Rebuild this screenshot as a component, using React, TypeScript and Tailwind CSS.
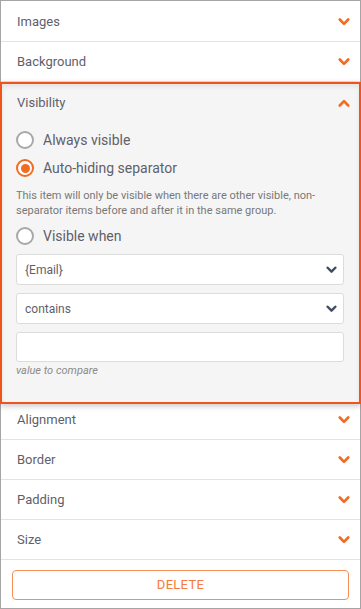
import React from "react";

const ORANGE = "#f26b21";

function Chevron({ up = false, color = ORANGE, w = 12 }: { up?: boolean; color?: string; w?: number }) {
  return (
    <svg width={w} height={8} viewBox="0 0 12 8" fill="none">
      <path
        d={up ? "M1.8 6.5 L6 2.2 L10.2 6.5" : "M1.8 1.5 L6 5.8 L10.2 1.5"}
        stroke={color}
        strokeWidth={2.6}
        strokeLinecap="round"
        strokeLinejoin="round"
      />
    </svg>
  );
}

function Row({ title, className }: { title: string; className: string }) {
  return (
    <div className={`flex items-center justify-between pl-4 pr-[10px] border-b border-[#e3e3e3] ${className}`}>
      <span className="text-[13px] text-[#5f5f6b]">{title}</span>
      <Chevron />
    </div>
  );
}

function Radio({ label, checked = false }: { label: string; checked?: boolean }) {
  return (
    <div className="flex h-[28px] items-center gap-[9px]">
      <div
        className={`flex h-[18px] w-[18px] items-center justify-center rounded-full border-2 bg-white ${
          checked ? "border-[#f26b21]" : "border-[#a8a8a8]"
        }`}
      >
        {checked && <div className="h-[9px] w-[9px] rounded-full bg-[#f26b21]" />}
      </div>
      <span className="text-[14px] text-[#5f5f6b]">{label}</span>
    </div>
  );
}

function Select({ value, className }: { value: string; className: string }) {
  return (
    <div
      className={`flex h-[31px] items-center justify-between rounded-[3px] border border-[#dcdcdc] bg-white pl-2 pr-[6px] ${className}`}
    >
      <span className="text-[12px] text-[#5f5f6b]">{value}</span>
      <Chevron color="#3f4b5e" w={11} />
    </div>
  );
}

export default function App() {
  return (
    <div className="flex h-[609px] w-[361px] flex-col border border-[#a5a5a5] bg-white font-['Roboto','Liberation_Sans',sans-serif]">
      <Row title="Images" className="h-[41px] pt-px" />
      <Row title="Background" className="h-[40px]" />

      {/* Visibility panel */}
      <div className="relative z-10 -mx-px flex flex-col border-2 border-[#f0531c] bg-[#f5f5f5] pl-[14px] pr-[15px] pb-[24px] shadow-[0_2px_6px_rgba(0,0,0,0.22),inset_0_3px_4px_rgba(0,0,0,0.07)]">
        <div className="flex h-[37px] items-center justify-between pl-px pt-px">
          <span className="text-[13px] text-[#5f5f6b]">Visibility</span>
          <div className="-mr-[6px]">
            <Chevron up />
          </div>
        </div>
        <div className="mt-[5px] flex flex-col">
          <Radio label="Always visible" />
          <Radio label="Auto-hiding separator" checked />
        </div>
        <p className="mt-[6px] text-[11px] leading-[15px] text-[#787878]">
          This item will only be visible when there are other visible, non-separator items before and after it in the
          same group.
        </p>
        <div className="mt-[4px]">
          <Radio label="Visible when" />
        </div>
        <Select value="{Email}" className="mt-[4px]" />
        <Select value="contains" className="mt-[8px]" />
        <div className="mt-[8px] h-[30px] rounded-[3px] border border-[#dcdcdc] bg-white" />
        <span className="mt-[2px] text-[11px] italic leading-[14px] text-[#8a8a8a]">value to compare</span>
      </div>

      <Row title="Alignment" className="h-[36px] pb-[4px]" />
      <Row title="Border" className="h-[40px]" />
      <Row title="Padding" className="h-[40px]" />
      <Row title="Size" className="h-[40px]" />

      <div className="px-[11px] pt-[10px]">
        <button className="flex h-[30px] w-full items-center justify-center rounded-[4px] border border-[#f79058] bg-white text-[13px] tracking-[0.3px] text-[#f47a3a]">
          DELETE
        </button>
      </div>
    </div>
  );
}
